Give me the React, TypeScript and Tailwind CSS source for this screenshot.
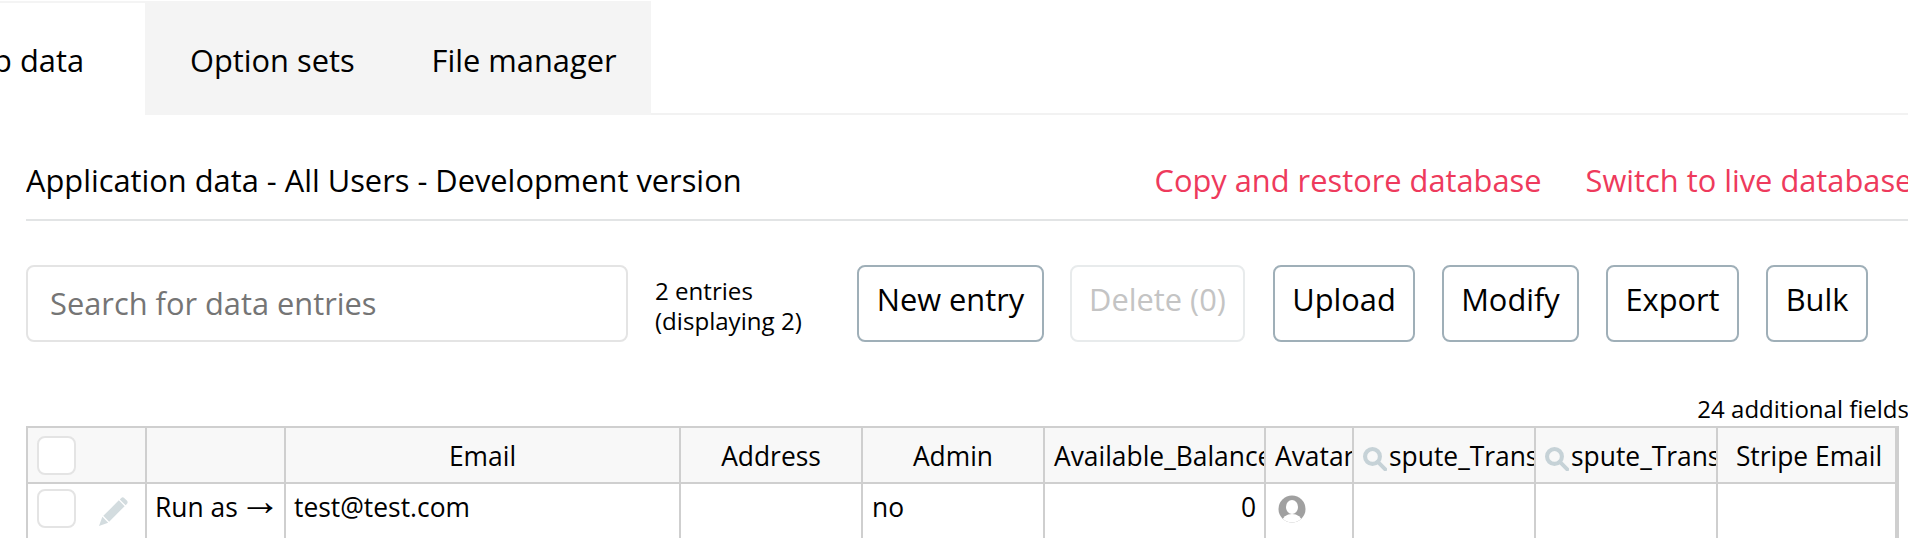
import React from "react";

const Btn = ({ label, w, ml, disabled }: { label: string; w: string; ml: string; disabled?: boolean }) => (
  <div className={`${w} ${ml} h-[77px] shrink-0 rounded-[8px] border-2 flex items-center justify-center pb-[9px] text-[30.8px] ${disabled ? "border-[#e8ebec] text-[#c4c4c4]" : "border-[#9fafb8] text-black"}`}>
    {label}
  </div>
);

const Search = () => (
  <svg viewBox="2 2 21 21" className="absolute left-[9px] top-[19px] w-[24px] h-[24px]" fill="none" stroke="#c6d2d7" strokeWidth="3.6">
    <circle cx="10.3" cy="10.3" r="6.5" />
    <path d="M15 15 L21.5 21.5" strokeLinecap="round" strokeWidth="3.4" />
  </svg>
);

const Th = ({ w, children, className = "" }: { w: string; children?: React.ReactNode; className?: string }) => (
  <div className={`${w} shrink-0 h-full border-r-2 border-[#cfcfcf] relative overflow-hidden whitespace-nowrap flex items-center text-[26.4px] ${className}`}>
    {children}
  </div>
);

export default function App() {
  return (
    <div className="w-[1908px] h-[538px] overflow-hidden bg-white text-black font-['Open_Sans',sans-serif]">
      <div className="h-[115px] flex items-stretch">
        <div className="w-[145px] shrink-0 mt-[1px] bg-[#f4f4f4] pt-[2px]">
          <div className="h-full bg-white text-[30.8px] flex items-center justify-end pr-[61px] pt-[3px] whitespace-nowrap overflow-hidden">
            App data
          </div>
        </div>
        <div className="w-[506px] shrink-0 mt-[1px] bg-[#f4f4f4] flex items-center text-[30.8px] pt-[5px] whitespace-nowrap">
          <span className="ml-[45px]">Option sets</span>
          <span className="ml-[77px]">File manager</span>
        </div>
        <div className="grow border-b-2 border-[#f2f2f2]" />
      </div>

      <div className="pl-[26px]">
        <div className="h-[106px] flex items-center border-b-2 border-[#e2e4e5] whitespace-nowrap overflow-hidden pt-[26px]">
          <span className="text-[30.8px]">Application data - All Users - Development version</span>
          <div className="flex text-[30.8px] text-[#ee3a5c] shrink-0 ml-[413px]">
            <span>Copy and restore database</span>
            <span className="ml-[44px]">Switch to live database</span>
          </div>
        </div>

        <div className="flex items-center mt-[44px] h-[77px]">
          <div className="w-[602px] h-[77px] shrink-0 rounded-[8px] border-2 border-[#e4e4e4] flex items-center pl-[22px] text-[30.8px] text-[#757575]">
            Search for data entries
          </div>
          <div className="ml-[27px] w-[202px] shrink-0 text-[24.1px] leading-[30px] whitespace-nowrap mt-[4px]">
            2 entries
            <br />
            (displaying 2)
          </div>
          <Btn label="New entry" w="w-[187px]" ml="ml-0" />
          <Btn label="Delete (0)" w="w-[175px]" ml="ml-[26px]" disabled />
          <Btn label="Upload" w="w-[142px]" ml="ml-[28px]" />
          <Btn label="Modify" w="w-[137px]" ml="ml-[27px]" />
          <Btn label="Export" w="w-[133px]" ml="ml-[27px]" />
          <Btn label="Bulk" w="w-[102px]" ml="ml-[27px]" />
        </div>

        <div className="h-[84px] flex items-end justify-end pb-[2px] text-[24px] leading-[30px] whitespace-nowrap -mr-[1px]">
          24 additional fields
        </div>

        <div className="w-[1873px] border-2 border-[#cfcfcf] border-b-0 h-[112px]">
          <div className="flex h-[56px] bg-[#f8f8f8] border-b-2 border-[#cfcfcf]">
            <Th w="w-[119px]" className="pl-[9px]">
              <div className="w-[39px] h-[39px] rounded-[8px] border-2 border-[#e4e4e4] bg-white" />
            </Th>
            <Th w="w-[139px]" />
            <Th w="w-[395px]" className="justify-center pt-[3px]">Email</Th>
            <Th w="w-[182px]" className="justify-center pt-[3px]">Address</Th>
            <Th w="w-[182px]" className="justify-center pt-[3px]">Admin</Th>
            <Th w="w-[221px]" className="pl-[9px] pt-[3px]">Available_Balance</Th>
            <Th w="w-[88px]" className="pl-[9px] pt-[3px]">Avatar</Th>
            <Th w="w-[182px]" className="pl-[35px] pt-[3px]"><Search />spute_Transactions</Th>
            <Th w="w-[182px]" className="pl-[35px] pt-[3px]"><Search />spute_Transactions</Th>
            <Th w="w-[179px]" className="justify-center border-r-0 pt-[3px] pl-[5px]">Stripe Email</Th>
          </div>
          <div className="flex h-[54px]">
            <Th w="w-[119px]" className="pl-[9px]">
              <div className="w-[39px] h-[39px] rounded-[8px] border-2 border-[#e4e4e4] bg-white -mt-[6px]" />
              <svg viewBox="0 0 32 32" className="ml-[22px] w-[31px] h-[31px]">
                <path fill="#d3dcdf" d="M24 2 Q25.5 .8 27 2 L30 5 Q31.2 6.5 30 8 L28.5 9.5 22.5 3.5ZM21.5 4.5 27.5 10.5 11.5 26.5 5.5 20.5ZM4.5 21.5 10.5 27.5 1 31Z" />
              </svg>
            </Th>
            <Th w="w-[139px]" className="pl-[8px] pb-[6px]">Run as<span className="ml-[1px] font-['Liberation_Serif'] text-[42px] leading-none -mt-[14px]">→</span></Th>
            <Th w="w-[395px]" className="pl-[8px] pb-[6px]">test@test.com</Th>
            <Th w="w-[182px]" />
            <Th w="w-[182px]" className="pl-[9px] pb-[6px]">no</Th>
            <Th w="w-[221px]" className="justify-end pr-[8px] pb-[6px]">0</Th>
            <Th w="w-[88px]" className="pl-[12px] pb-[4px]">
              <svg viewBox="0 0 28 28" className="w-[28px] h-[28px]">
                <defs>
                  <clipPath id="c"><circle cx="14" cy="14" r="13.5" /></clipPath>
                </defs>
                <circle cx="14" cy="14" r="13.5" fill="#a0a0a0" />
                <g clipPath="url(#c)" fill="#fff">
                  <ellipse cx="14" cy="12" rx="6" ry="7" />
                  <ellipse cx="14" cy="27" rx="10" ry="8" />
                </g>
              </svg>
            </Th>
            <Th w="w-[182px]" />
            <Th w="w-[182px]" />
            <Th w="w-[179px]" className="border-r-0" />
          </div>
        </div>
      </div>
    </div>
  );
}
